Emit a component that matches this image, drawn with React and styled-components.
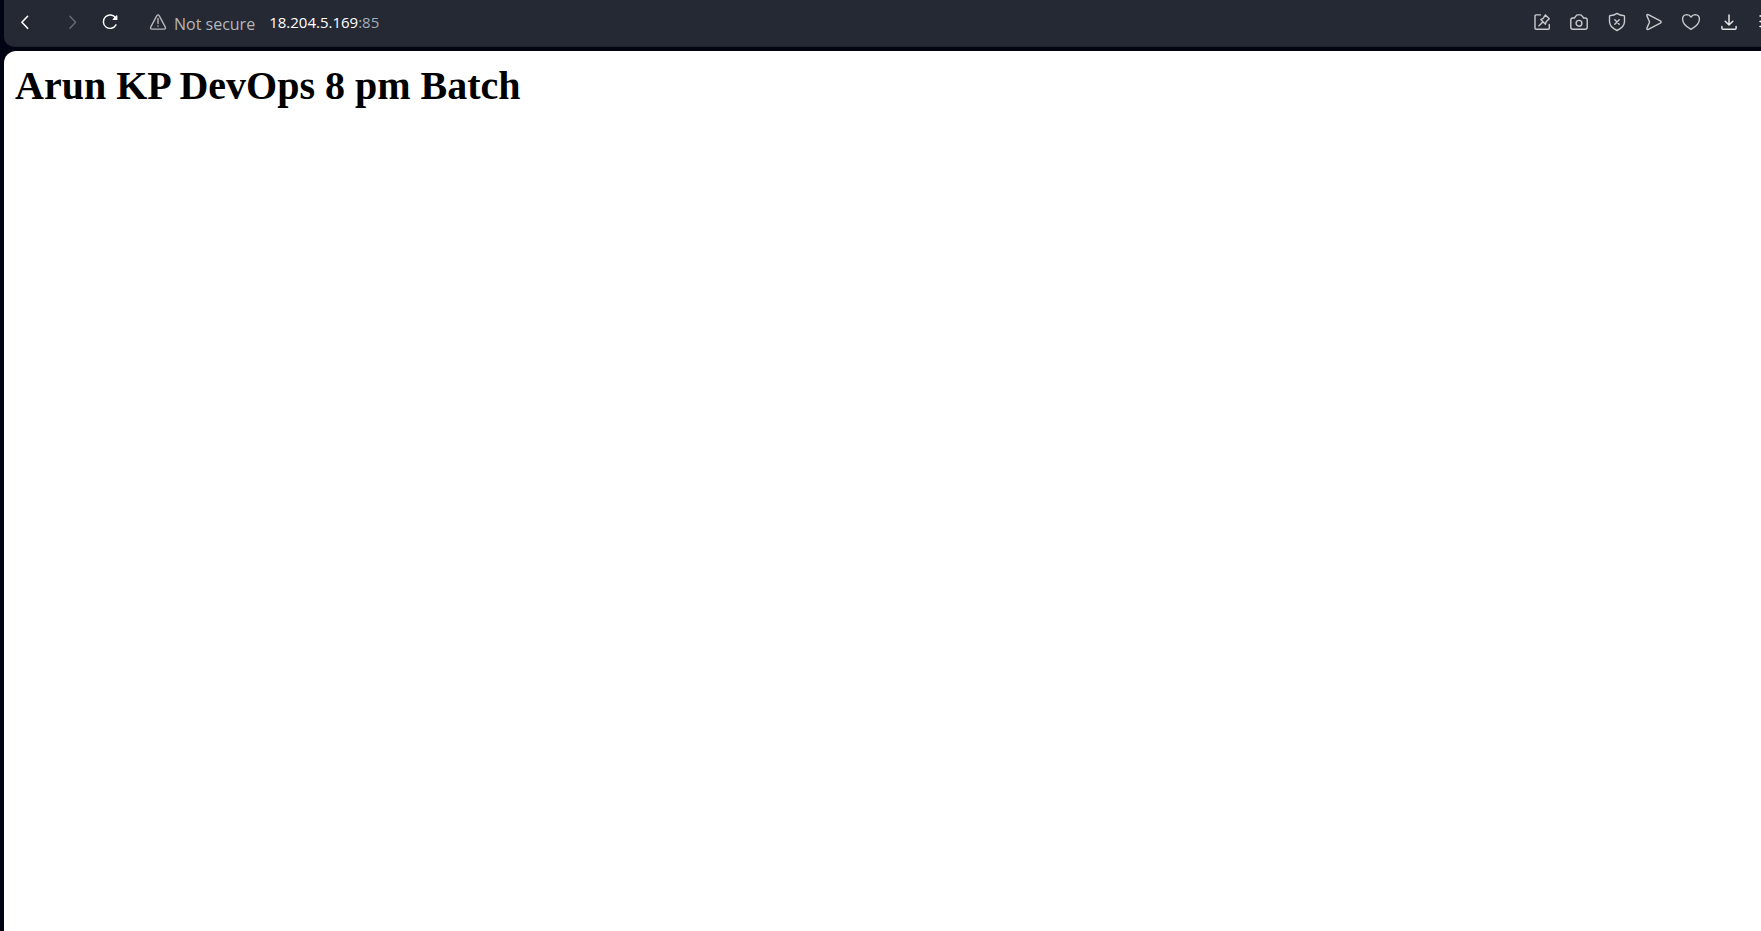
import React from "react";
import styled, { createGlobalStyle } from "styled-components";

const GlobalStyle = createGlobalStyle`
  *, *::before, *::after { box-sizing: border-box; }
  body { margin: 0; background: #020414; }
`;

const Browser = styled.div`
  display: flex;
  flex-direction: column;
  gap: 4px;
  min-height: 100vh;
  padding-left: 4px;
  overflow: hidden;
  background: #020414;
`;

const Toolbar = styled.header`
  display: flex;
  align-items: center;
  height: 47px;
  padding: 0 0 3px 11px;
  overflow: hidden;
  border-bottom: 1px solid #1e202c;
  border-radius: 0 0 0 10px;
  background: #252934;
  font-family: "Open Sans", "Noto Sans", sans-serif;
`;

const Navigation = styled.nav`
  display: flex;
  align-items: center;
`;

const IconButton = styled.button`
  display: flex;
  flex: none;
  width: 20px;
  height: 20px;
  padding: 0;
  border: 0;
  background: none;
  color: ${({ $color }) => $color || "#c9cacd"};
`;

const BackButton = styled(IconButton)`
  margin-right: 28px;
`;

const ForwardButton = styled(IconButton)`
  margin-right: 17px;
`;

const Glyph = styled.svg`
  display: block;
  width: 20px;
  height: 20px;
  fill: none;
  stroke: currentColor;
  stroke-width: ${({ $weight }) => $weight || 1.4};
  stroke-linecap: round;
  stroke-linejoin: round;
`;

const Security = styled.button`
  display: flex;
  align-items: center;
  gap: 6px;
  margin-left: 28px;
  padding: 0;
  border: 0;
  background: none;
  color: #b5b6ba;
  font: 400 16px/24px "Open Sans", "Noto Sans", sans-serif;
  white-space: nowrap;
`;

const SecurityLabel = styled.span`
  padding-top: 4px;
`;

const Address = styled.a`
  margin-left: 14px;
  color: #ffffff;
  font-size: 15px;
  line-height: 24px;
  text-decoration: none;
`;

const Port = styled.span`
  color: #a3acb8;
`;

const Actions = styled.div`
  display: flex;
  flex: none;
  justify-content: space-between;
  width: 244px;
  margin-left: auto;
  margin-right: -15px;
`;

const Page = styled.main`
  flex: 1;
  padding: 9px 11px;
  border-radius: 12px 0 0 0;
  background: #ffffff;
`;

const Title = styled.h1`
  margin: 0;
  color: #000000;
  font: bold 40px/52px "Liberation Serif", "Times New Roman", serif;
`;

function Icon({ children, weight }) {
  return (
    <Glyph viewBox="0 0 20 20" $weight={weight} aria-hidden="true">
      {children}
    </Glyph>
  );
}

const actions = [
  {
    label: "Edit page",
    drawing: (
      <>
        <path d="M8.5 2.9H4.1Q3 2.9 3 4V16.2Q3 17.3 4.1 17.3H16.2Q17.3 17.3 17.3 16.2V12.5" />
        <path d="M13.4 2.9L17.3 6.8L14.1 9.7L13.4 12.2L8.8 7.6L11.2 6.4ZM10.8 10L7 13.8" />
      </>
    ),
  },
  {
    label: "Snapshot",
    drawing: (
      <>
        <path d="M3.8 6H5.4L7.2 3.6Q7.7 2.9 8.5 2.9H11.5Q12.3 2.9 12.8 3.6L14.6 6H16.2Q18.2 6 18.2 8V15.3Q18.2 17.3 16.2 17.3H3.8Q1.8 17.3 1.8 15.3V8Q1.8 6 3.8 6Z" />
        <circle cx="10" cy="11.3" r="2.9" />
      </>
    ),
  },
  {
    label: "Ad blocker",
    drawing: (
      <>
        <path d="M10 1.4Q13.2 3.6 16.5 3.5Q17.5 3.5 17.5 4.6V9.5Q17.5 15 10 18.5Q2.5 15 2.5 9.5V4.6Q2.5 3.5 3.5 3.5Q6.8 3.6 10 1.4Z" />
        <path d="M7.8 7.8L12.2 12.2M12.2 7.8L7.8 12.2" />
      </>
    ),
  },
  {
    label: "Send page",
    drawing: (
      <path d="M4.3 2.6L16.3 8.9Q18 10 16.3 11.1L4.3 17.4Q2.3 18 3 15.9L5.6 10L3 4.1Q2.3 2 4.3 2.6Z" />
    ),
  },
  {
    label: "Bookmark",
    drawing: (
      <path d="M10 5Q8.4 2.6 5.8 2.6Q1.6 2.8 1.6 7.3Q1.6 12.8 10 17.4Q18.4 12.8 18.4 7.3Q18.4 2.8 14.2 2.6Q11.6 2.6 10 5Z" />
    ),
  },
  {
    label: "Downloads",
    color: "#e3e4e6",
    weight: 1.5,
    drawing: (
      <path d="M10 3V12.8M6.2 9.3L10 13L13.8 9.3M2.9 14.5V16.3Q2.9 17.3 3.9 17.3H16.1Q17.1 17.3 17.1 16.3V14.5" />
    ),
  },
  {
    label: "Easy setup",
    color: "#ffffff",
    drawing: <path d="M4 4H16M4 9.5H5M8 9.5H16M4 14.5H16" />,
  },
];

export default function App() {
  return (
    <>
      <GlobalStyle />
      <Browser>
        <Toolbar>
          <Navigation aria-label="History">
            <BackButton type="button" aria-label="Back" $color="#ffffff">
              <Icon weight={1.6}>
                <path d="M12.6 4.3L6.9 10.3L12.6 16.3" />
              </Icon>
            </BackButton>
            <ForwardButton type="button" aria-label="Forward" $color="#696c75">
              <Icon>
                <path d="M6.9 4.3L12.6 10.3L6.9 16.3" />
              </Icon>
            </ForwardButton>
            <IconButton type="button" aria-label="Reload" $color="#ffffff">
              <Icon weight={1.4}>
                <path d="M15.7 6A6.7 6.7 0 1 0 16 12.8" />
                <path d="M16.7 4V7.4H13.3Z" fill="currentColor" />
              </Icon>
            </IconButton>
          </Navigation>
          <Security type="button">
            <Icon>
              <path d="M11.3 3.8L17.3 15.2Q18 17.1 16 17.1H4Q2 17.1 2.7 15.2L8.7 3.8Q10 2 11.3 3.8Z" />
              <path d="M10 6.5V11.5M10 14V14.3" />
            </Icon>
            <SecurityLabel>Not secure</SecurityLabel>
          </Security>
          <Address href="#">
            18.204.5.169<Port>:85</Port>
          </Address>
          <Actions>
            {actions.map(({ label, color, weight, drawing }) => (
              <IconButton key={label} type="button" aria-label={label} $color={color}>
                <Icon weight={weight}>{drawing}</Icon>
              </IconButton>
            ))}
          </Actions>
        </Toolbar>
        <Page>
          <Title>Arun KP DevOps 8 pm Batch</Title>
        </Page>
      </Browser>
    </>
  );
}
